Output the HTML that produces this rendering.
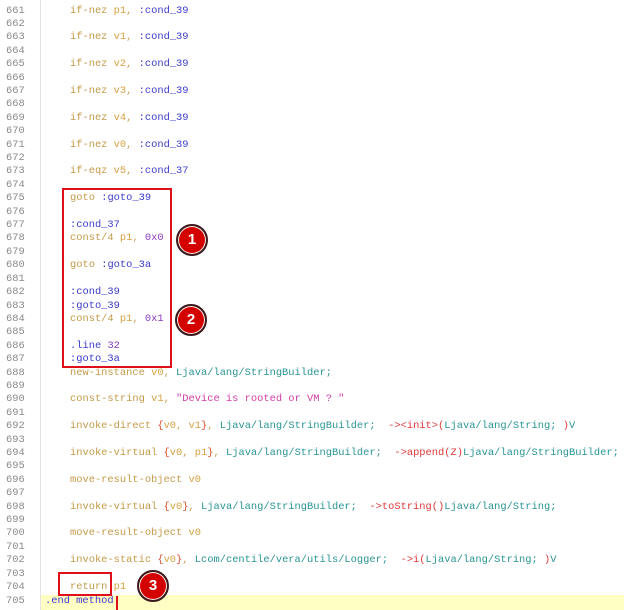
<!DOCTYPE html>
<html><head><meta charset="utf-8"><style>
html,body{margin:0;padding:0;width:624px;height:610px;overflow:hidden;background:#fff;}
#g{position:absolute;left:0;top:0;width:40px;height:610px;background:#fff;border-right:1px solid #e4e4e4;}
.ln{position:absolute;left:6px;font:10.4px/13.41px "Liberation Mono",monospace;color:#8a8a8a;}
.c{position:absolute;left:70px;font:10.4px/13.41px "Liberation Mono",monospace;white-space:pre;color:#c8a050;}
.k{color:#c49a48}.r{color:#d8a040}.l{color:#3b3bcc}.t{color:#2a9494}.m{color:#e03838}.s{color:#d23ca8}.p{color:#e05030}
.hl{position:absolute;left:41px;top:595px;width:583px;height:15px;background:#ffffc4;}
.box{position:absolute;border:2px solid #e0101a;}
.cir{position:absolute;width:28px;height:28px;border-radius:50%;background:#d40000;border:2px solid #3a1a1a;color:#fff;font:bold 15px/28px "Liberation Sans",sans-serif;text-align:center;box-shadow:0 0 0 1px #fff inset;}
</style></head><body>
<div id="g"></div>
<div class="hl"></div>
<div id="code"></div>
<div class="c" style="left:70px;top:4px">
</div>
<script>
var L={
661:'<span class="k">if-nez</span> <span class="r">p1</span>, <span class="l">:cond_39</span>',
663:'<span class="k">if-nez</span> <span class="r">v1</span>, <span class="l">:cond_39</span>',
665:'<span class="k">if-nez</span> <span class="r">v2</span>, <span class="l">:cond_39</span>',
667:'<span class="k">if-nez</span> <span class="r">v3</span>, <span class="l">:cond_39</span>',
669:'<span class="k">if-nez</span> <span class="r">v4</span>, <span class="l">:cond_39</span>',
671:'<span class="k">if-nez</span> <span class="r">v0</span>, <span class="l">:cond_39</span>',
673:'<span class="k">if-eqz</span> <span class="r">v5</span>, <span class="l">:cond_37</span>',
675:'<span class="k">goto</span> <span class="l">:goto_39</span>',
677:'<span class="l">:cond_37</span>',
678:'<span class="k">const/4</span> <span class="r">p1</span>, <span class="l" style="color:#8a3ac0">0x0</span>',
680:'<span class="k">goto</span> <span class="l">:goto_3a</span>',
682:'<span class="l">:cond_39</span>',
683:'<span class="l">:goto_39</span>',
684:'<span class="k">const/4</span> <span class="r">p1</span>, <span class="l" style="color:#8a3ac0">0x1</span>',
686:'<span class="l">.line</span> <span class="l" style="color:#8a3ac0">32</span>',
687:'<span class="l">:goto_3a</span>',
688:'<span class="k">new-instance</span> <span class="r">v0</span>, <span class="t">Ljava/lang/StringBuilder;</span>',
690:'<span class="k">const-string</span> <span class="r">v1</span>, <span class="s">"Device is rooted or VM ? "</span>',
692:'<span class="k">invoke-direct</span> <span class="p">{</span><span class="r">v0</span>, <span class="r">v1</span><span class="p">}</span>, <span class="t">Ljava/lang/StringBuilder;</span>  <span class="m">-&gt;&lt;init&gt;(</span><span class="t">Ljava/lang/String;</span> <span class="m">)</span><span class="t">V</span>',
694:'<span class="k">invoke-virtual</span> <span class="p">{</span><span class="r">v0</span>, <span class="r">p1</span><span class="p">}</span>, <span class="t">Ljava/lang/StringBuilder;</span>  <span class="m">-&gt;append(Z)</span><span class="t">Ljava/lang/StringBuilder;</span>',
696:'<span class="k">move-result-object</span> <span class="r">v0</span>',
698:'<span class="k">invoke-virtual</span> <span class="p">{</span><span class="r">v0</span><span class="p">}</span>, <span class="t">Ljava/lang/StringBuilder;</span>  <span class="m">-&gt;toString()</span><span class="t">Ljava/lang/String;</span>',
700:'<span class="k">move-result-object</span> <span class="r">v0</span>',
702:'<span class="k">invoke-static</span> <span class="p">{</span><span class="r">v0</span><span class="p">}</span>, <span class="t">Lcom/centile/vera/utils/Logger;</span>  <span class="m">-&gt;i(</span><span class="t">Ljava/lang/String;</span> <span class="m">)</span><span class="t">V</span>',
704:'<span class="k">return</span> <span class="r">p1</span>',
705:'<span class="l">.end method</span>'
};
var h='';
for(var n=661;n<=705;n++){var y=(4.5+(n-661)*13.41).toFixed(2);
h+='<div class="ln" style="top:'+y+'px">'+n+'</div>';
if(L[n])h+='<div class="c" style="top:'+y+'px;left:'+(n==705?'45':'70')+'px">'+L[n]+'</div>';}
document.getElementById('code').innerHTML=h;
</script>
<div class="box" style="left:62px;top:188px;width:106px;height:176px"></div>
<div class="box" style="left:58px;top:572px;width:50px;height:20px"></div>
<div style="position:absolute;left:116px;top:596px;width:2px;height:14px;background:#e0101a"></div>
<div class="cir" style="left:176px;top:224px">1</div>
<div class="cir" style="left:175px;top:304px">2</div>
<div class="cir" style="left:137px;top:570px">3</div>
</body></html>
